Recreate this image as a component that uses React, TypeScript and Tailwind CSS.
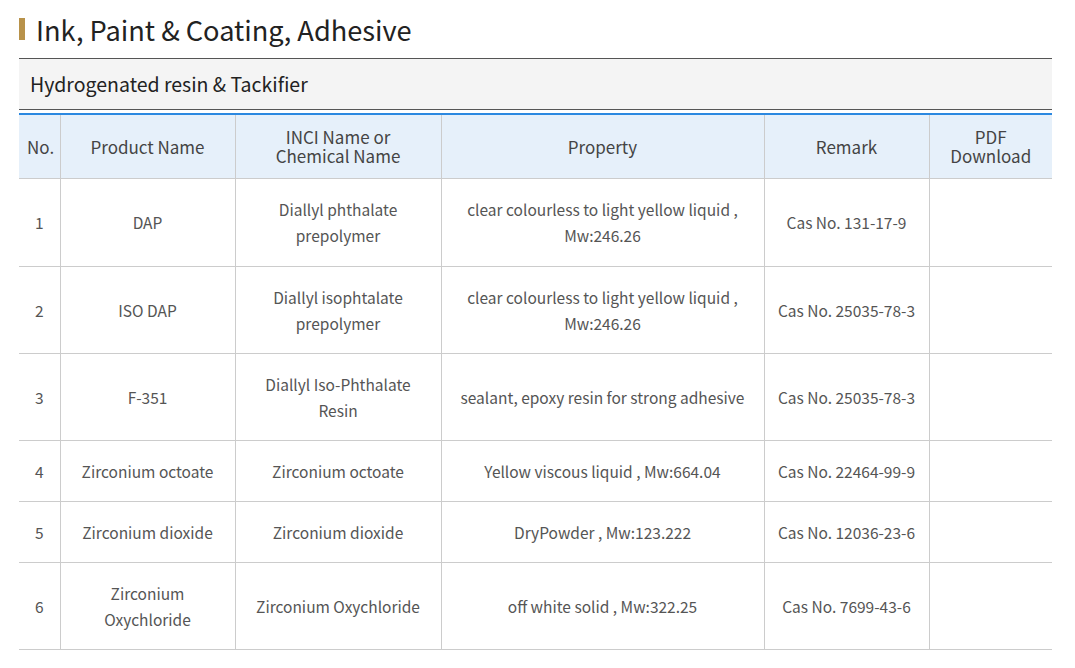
const rows = [
  { no: "1", name: ["DAP"], inci: ["Diallyl phthalate", "prepolymer"], prop: ["clear colourless to light yellow liquid ,", "Mw:246.26"], remark: "Cas No. 131-17-9", h: "h-[88px]" },
  { no: "2", name: ["ISO DAP"], inci: ["Diallyl isophtalate", "prepolymer"], prop: ["clear colourless to light yellow liquid ,", "Mw:246.26"], remark: "Cas No. 25035-78-3", h: "h-[87px]" },
  { no: "3", name: ["F-351"], inci: ["Diallyl Iso-Phthalate", "Resin"], prop: ["sealant, epoxy resin for strong adhesive"], remark: "Cas No. 25035-78-3", h: "h-[87px]" },
  { no: "4", name: ["Zirconium octoate"], inci: ["Zirconium octoate"], prop: ["Yellow viscous liquid , Mw:664.04"], remark: "Cas No. 22464-99-9", h: "h-[61px]" },
  { no: "5", name: ["Zirconium dioxide"], inci: ["Zirconium dioxide"], prop: ["DryPowder , Mw:123.222"], remark: "Cas No. 12036-23-6", h: "h-[61px]" },
  { no: "6", name: ["Zirconium", "Oxychloride"], inci: ["Zirconium Oxychloride"], prop: ["off white solid , Mw:322.25"], remark: "Cas No. 7699-43-6", h: "h-[87px]" },
];

function Lines({ lines }: { lines: string[] }) {
  return (
    <>
      {lines.map((l, i) => (
        <div key={i}>{l}</div>
      ))}
    </>
  );
}

export default function App() {
  const cell = "border border-[#cccccc] text-center align-middle px-2";
  return (
    <div className="min-h-screen bg-white pl-[19px] pt-[14px] w-[1052px]" style={{ fontFamily: '"Noto Sans CJK KR", "Noto Sans", sans-serif' }}>
      {/* Title */}
      <div className="flex items-center h-[30px]">
        <span className="w-[6px] h-[22px] bg-[#b8924a]" />
        <h1 className="ml-[11px] text-[27.2px] leading-[30px] text-[#222222]">Ink, Paint &amp; Coating, Adhesive</h1>
      </div>

      {/* Sub header */}
      <div className="mt-[14px] border-t border-b border-[#555555] bg-[#f4f4f4] h-[52px] flex items-center pl-[11px]">
        <span className="text-[19.5px] text-[#222222]">Hydrogenated resin &amp; Tackifier</span>
      </div>

      <table className="mt-[3px] w-[1033px] border-collapse table-fixed border-t-2 border-t-[#2b88e0] text-[15.5px] text-[#555555]">
        <colgroup>
          <col className="w-[41px]" />
          <col className="w-[175px]" />
          <col className="w-[206px]" />
          <col className="w-[323px]" />
          <col className="w-[165px]" />
          <col className="w-[123px]" />
        </colgroup>
        <thead>
          <tr className="h-[64px] bg-[#e6f0fa] text-[17px] leading-[19px] text-[#444444]">
            <th className={`${cell} font-normal border-l-0 border-t-0 px-0`}>No.</th>
            <th className={`${cell} font-normal border-t-0`}>Product Name</th>
            <th className={`${cell} font-normal border-t-0`}>INCI Name or<br />Chemical Name</th>
            <th className={`${cell} font-normal border-t-0`}>Property</th>
            <th className={`${cell} font-normal border-t-0`}>Remark</th>
            <th className={`${cell} font-normal border-r-0 border-t-0`}>PDF<br />Download</th>
          </tr>
        </thead>
        <tbody className="leading-[26px]">
          {rows.map((r) => (
            <tr key={r.no} className={r.h}>
              <td className={`${cell} border-l-0 px-0`}>{r.no}</td>
              <td className={cell}><Lines lines={r.name} /></td>
              <td className={cell}><Lines lines={r.inci} /></td>
              <td className={cell}><Lines lines={r.prop} /></td>
              <td className={cell}>{r.remark}</td>
              <td className={`${cell} border-r-0`} />
            </tr>
          ))}
        </tbody>
      </table>
    </div>
  );
}
